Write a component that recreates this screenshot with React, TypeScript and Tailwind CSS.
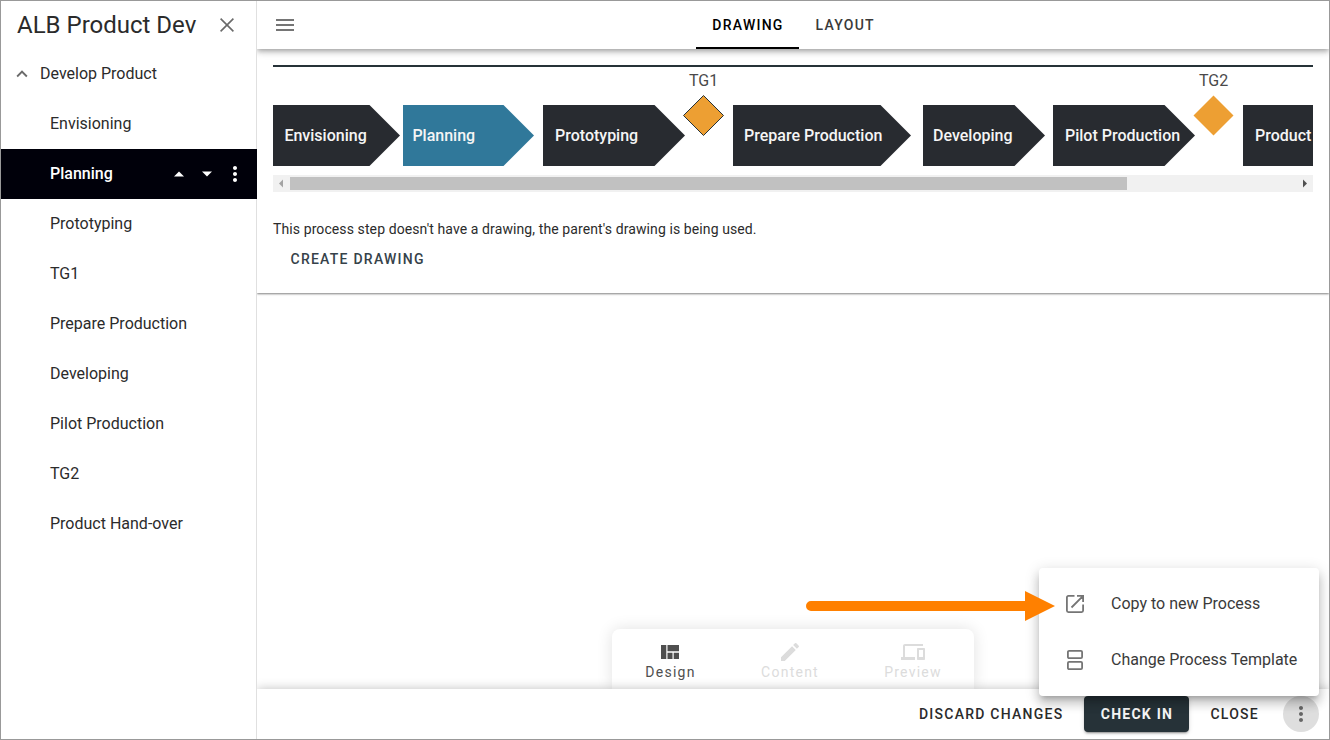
import React from "react";

type IconProps = { d: string; className?: string; size?: number };

const Icon = ({ d, className = "", size = 24 }: IconProps) => (
  <svg viewBox="0 0 24 24" width={size} height={size} className={`shrink-0 fill-current ${className}`}>
    <path d={d} />
  </svg>
);

const icons = {
  chevronUp: "M7.41 15.41 12 10.83l4.59 4.58L18 14l-6-6-6 6z",
  caretUp: "M7 14.5l5-5 5 5z",
  caretDown: "M7 9.5l5 5 5-5z",
  dots: "M12 8c1.1 0 2-.9 2-2s-.9-2-2-2-2 .9-2 2 .9 2 2 2zm0 2c-1.1 0-2 .9-2 2s.9 2 2 2 2-.9 2-2-.9-2-2-2zm0 6c-1.1 0-2 .9-2 2s.9 2 2 2 2-.9 2-2-.9-2-2-2z",
  quilt: "M3 5h5.300v14H3zM9.500 5H21v6.200H9.500zM9.500 12.700h5V19h-5zM15.700 12.700H21V19h-5.300z",
  pencil: "M3 17.25V21h3.75L17.81 9.94l-3.75-3.75L3 17.25zM20.71 7.04a1 1 0 0 0 0-1.41l-2.34-2.34a1 1 0 0 0-1.41 0l-1.83 1.83 3.75 3.75 1.83-1.83z",
  devices: "M4 6h18V4H4c-1.1 0-2 .9-2 2v11H0v3h14v-3H4V6zm19 2h-6c-.55 0-1 .45-1 1v10c0 .55.45 1 1 1h6c.55 0 1-.45 1-1V9c0-.55-.45-1-1-1zm-1 9h-4v-7h4v7z",
};

const before = ["Envisioning"];
const after = ["Prototyping", "TG1", "Prepare Production", "Developing", "Pilot Production", "TG2", "Product Hand-over"];

const TreeItem = ({ label }: { label: string }) => (
  <li className="flex h-[50px] items-center pl-[49px]">{label}</li>
);

const Sidebar = () => (
  <aside className="flex w-64 shrink-0 flex-col border-r border-[#e0e0e0] text-base text-[#2b2b2b]">
    <div className="flex h-12 items-center justify-between pl-4 pr-[22px]">
      <h1 className="text-2xl">ALB Product Dev</h1>
      <svg width="14" height="14" viewBox="0 0 14 14" className="stroke-[#6a6a6a]" strokeWidth="1.6">
        <path d="M.6.6 13.4 13.4M13.4.6.6 13.4" />
      </svg>
    </div>
    <ul>
      <li className="flex h-[50px] items-center pl-[10px]">
        <Icon d={icons.chevronUp} size={22} className="mr-[7px] text-[#6a6a6a]" />
        Develop Product
      </li>
      {before.map((l) => <TreeItem key={l} label={l} />)}
      <li className="relative z-20 -mr-px flex h-[50px] items-center bg-[#00000a] pl-[49px] pr-[10px] font-medium text-white">
        <span className="grow">Planning</span>
        <Icon d={icons.caretUp} className="mr-1" />
        <Icon d={icons.caretDown} className="mr-1" />
        <Icon d={icons.dots} />
      </li>
      {after.map((l) => <TreeItem key={l} label={l} />)}
    </ul>
  </aside>
);

type Step = { x: number; w: number; tx: number; label: string; fill?: string };

const steps: Step[] = [
  { x: 0, w: 127, tx: 11.4, label: "Envisioning" },
  { x: 130, w: 131, tx: 139.4, label: "Planning", fill: "#30789a" },
  { x: 270, w: 142, tx: 282, label: "Prototyping" },
  { x: 460, w: 178, tx: 471, label: "Prepare Production" },
  { x: 650, w: 122, tx: 660, label: "Developing" },
  { x: 780, w: 142, tx: 792, label: "Pilot Production" },
  { x: 970, w: 200, tx: 982, label: "Product" },
];

const ProcessMap = () => (
  <svg width="1040" height="110" viewBox="0 0 1040 110" className="block overflow-hidden" fontSize="16">
    <rect width="1040" height="2" fill="#263238" />
    {steps.map((s) => (
      <g key={s.label}>
        <path d={`M${s.x} 40h${s.w - 30.5}l30.5 30.5l-30.5 30.5h-${s.w - 30.5}z`} fill={s.fill ?? "#282b30"} />
        <text x={s.tx} y="76" fill="#f5f5f5" fontWeight="500">{s.label}</text>
      </g>
    ))}
    <path d="M430.500 30.500 450.500 50.500 430.500 70.500 410.500 50.500z" fill="#ed9f33" stroke="#263238" />
    <path d="M940.500 30.500 960.500 50.500 940.500 70.500 920.500 50.500z" fill="#ed9f33" />
    <text x="416" y="21" fill="#4a4a4a">TG1</text>
    <text x="926" y="21" fill="#4a4a4a">TG2</text>
  </svg>
);

const ScrollBar = () => (
  <div className="flex h-[17px] w-[1040px] items-center bg-[#f1f1f1]">
    <svg width="17" height="17" className="fill-[#a3a3a3]"><path d="M6 8.500 10 4.500v8z" /></svg>
    <div className="h-[13px] w-[837px] bg-[#c1c1c1]" />
    <div className="grow" />
    <svg width="17" height="17" className="fill-[#505050]"><path d="M11 8.500 7 4.500v8z" /></svg>
  </div>
);

const Mode = ({ icon, label, className }: { icon: string; label: string; className: string }) => (
  <div className={`flex flex-col items-center pt-[11px] ${className}`}>
    <Icon d={icon} />
    <span className="-mt-[2px] pl-px text-sm tracking-[1.25px]">{label}</span>
  </div>
);

const button = "text-sm font-medium tracking-[1.25px]";

export default function App() {
  return (
    <div className="relative flex h-[740px] w-[1330px] overflow-hidden border border-[#999] bg-white font-[Roboto,sans-serif]">
      <Sidebar />
      <main className="flex min-w-0 grow flex-col overflow-hidden">
        <header className="relative z-10 flex h-12 shrink-0 bg-white pl-4 shadow-[0_2px_4px_-1px_rgba(0,0,0,.2),0_4px_5px_rgba(0,0,0,.14),0_1px_10px_rgba(0,0,0,.12)]">
          <div className="flex w-[423px] items-center">
            <svg width="24" height="24" viewBox="0 0 24 24" className="fill-[#757575]"><path d="M3 6h18v2H3zM3 11h18v2H3zM3 16h18v2H3z" /></svg>
          </div>
          <nav className={`flex ${button}`}>
            <div className="flex w-[103px] items-center justify-center border-b-2 border-black pl-px pt-[2px] text-black">DRAWING</div>
            <div className="flex items-center pl-[16.5px] text-[#3a3a3a]">LAYOUT</div>
          </nav>
        </header>
        <section className="h-[244px] shrink-0 px-4 pt-4 shadow-[0_1px_2px_rgba(0,0,0,.5)]">
          <ProcessMap />
          <ScrollBar />
          <p className="mt-[27px] text-sm leading-5 tracking-[0.1px] text-[#2b2b2b]">This process step doesn't have a drawing, the parent's drawing is being used.</p>
          <div className={`mt-[10px] pl-[17.5px] leading-5 text-[#36424a] ${button}`}>CREATE DRAWING</div>
        </section>
        <div className="flex grow items-end justify-center">
          <div className="flex h-[60px] w-[362px] rounded-t-lg bg-white shadow-[0_0_16px_rgba(0,0,0,.12)]">
            <Mode icon={icons.quilt} label="Design" className="w-[116px] text-[#4f4f4f]" />
            <Mode icon={icons.pencil} label="Content" className="w-[123px] text-[#dcdcdc]" />
            <Mode icon={icons.devices} label="Preview" className="w-[123px] text-[#dcdcdc]" />
          </div>
        </div>
        <footer className={`relative flex h-[50px] shrink-0 items-center justify-end bg-white pr-[10px] text-[#2b2b2b] shadow-[0_0_10px_rgba(0,0,0,.25)] ${button}`}>
          <span className="mr-[21px]">DISCARD CHANGES</span>
          <span className="flex h-9 w-[105px] items-center justify-center rounded bg-[#263238] font-bold text-[#f5f5f5] shadow-[0_3px_1px_-2px_rgba(0,0,0,.2),0_2px_2px_rgba(0,0,0,.14),0_1px_5px_rgba(0,0,0,.12)]">CHECK IN</span>
          <span className="ml-[21px] mr-6">CLOSE</span>
          <span className="flex h-9 w-9 items-center justify-center rounded-full bg-[#dedede] text-[#666]">
            <Icon d={icons.dots} />
          </span>
        </footer>
      </main>
      <div className="absolute left-[1038px] top-[567px] z-20 flex h-32 w-[280px] flex-col rounded bg-white py-2 text-base text-[#3a3a3a] shadow-[0_5px_5px_-3px_rgba(0,0,0,.2),0_8px_10px_1px_rgba(0,0,0,.14),0_3px_14px_2px_rgba(0,0,0,.12)]">
        <div className="flex h-14 items-center gap-6 pl-6">
          <svg width="24" height="24" viewBox="0 0 24 24" className="fill-none stroke-[#757575]" strokeWidth="1.8">
            <path d="M11.500 3.900H5.400a1.500 1.500 0 0 0-1.500 1.500v13.200a1.500 1.500 0 0 0 1.500 1.500h13.200a1.500 1.500 0 0 0 1.500-1.500V12.500M14 3.900h6.100V10M20.100 3.900 8.500 15.500" />
          </svg>
          Copy to new Process
        </div>
        <div className="flex h-14 items-center gap-6 pl-6">
          <svg width="24" height="24" viewBox="0 0 24 24" className="fill-none stroke-[#757575]" strokeWidth="1.8">
            <rect x="4.900" y="2.900" width="14.200" height="7.200" rx="1.200" />
            <rect x="4.900" y="13.900" width="14.200" height="7.200" rx="1.200" />
          </svg>
          Change Process Template
        </div>
      </div>
      <svg width="250" height="30" className="absolute left-[805px] top-[590px] z-30 fill-[#ff8000]">
        <path d="M5 10H219V0L249 15 219 30V20H5a5 5 0 0 1 0-10z" />
      </svg>
    </div>
  );
}
